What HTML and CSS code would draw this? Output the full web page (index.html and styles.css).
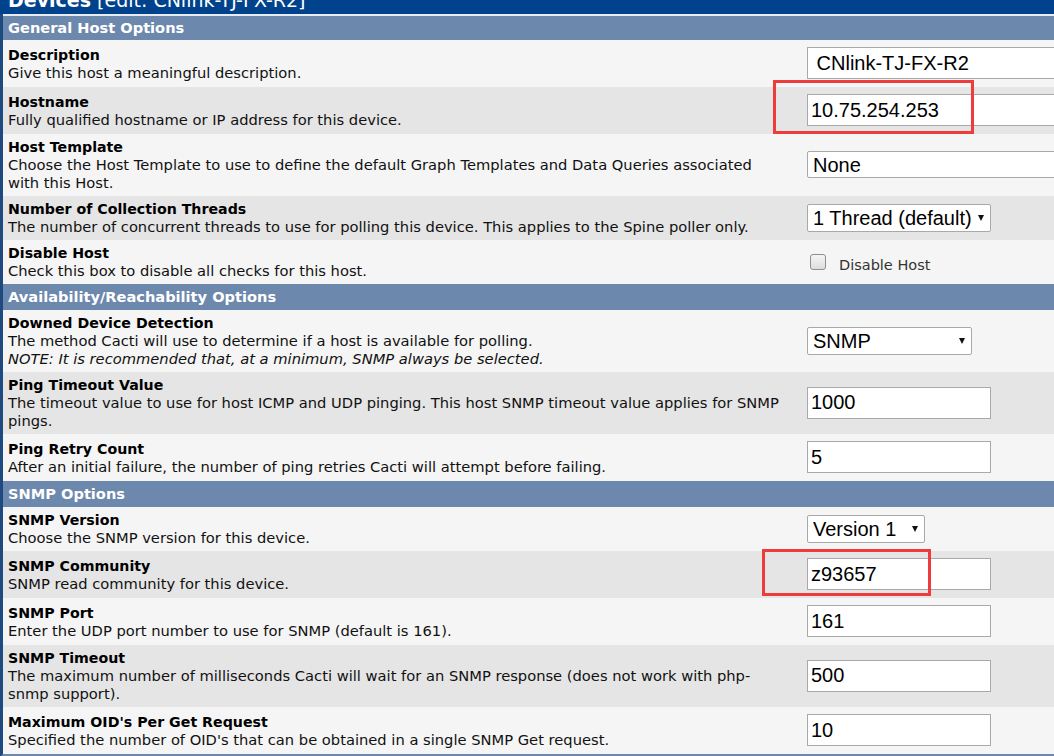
FILE: index.html
```html
<!DOCTYPE html>
<html>
<head>
<meta charset="utf-8">
<title>Devices</title>
<link rel="stylesheet" href="styles.css">
</head>
<body>
<div class="page">
  <div class="titlebar"><div class="title"><b>Devices</b> [edit: CNlink-TJ-FX-R2]</div></div>
  <div class="frame">
    <div class="section first">General Host Options</div>
    <div class="row">
      <div class="lbl"><b>Description</b><br>Give this host a meaningful description.</div>
      <div class="ctl"><input class="txt wide" type="text" value=" CNlink-TJ-FX-R2"></div>
    </div>
    <div class="row alt">
      <div class="lbl"><b>Hostname</b><br>Fully qualified hostname or IP address for this device.</div>
      <div class="ctl"><input class="txt wide" type="text" value="10.75.254.253"></div>
    </div>
    <div class="row">
      <div class="lbl"><b>Host Template</b><br>Choose the Host Template to use to define the default Graph Templates and Data Queries associated<br>with this Host.</div>
      <div class="ctl"><span class="sel wide"><select><option>None</option></select></span></div>
    </div>
    <div class="row alt">
      <div class="lbl"><b>Number of Collection Threads</b><br>The number of concurrent threads to use for polling this device. This applies to the Spine poller only.</div>
      <div class="ctl"><span class="sel arrow w184"><select><option>1 Thread (default)</option></select></span></div>
    </div>
    <div class="row">
      <div class="lbl"><b>Disable Host</b><br>Check this box to disable all checks for this host.</div>
      <div class="ctl"><label class="chk"><span class="box"></span><span class="chk-text">Disable Host</span></label></div>
    </div>

    <div class="section">Availability/Reachability Options</div>
    <div class="row">
      <div class="lbl"><b>Downed Device Detection</b><br>The method Cacti will use to determine if a host is available for polling.<br><i>NOTE: It is recommended that, at a minimum, SNMP always be selected.</i></div>
      <div class="ctl"><span class="sel arrow w165"><select><option>SNMP</option></select></span></div>
    </div>
    <div class="row alt">
      <div class="lbl"><b>Ping Timeout Value</b><br>The timeout value to use for host ICMP and UDP pinging. This host SNMP timeout value applies for SNMP<br>pings.</div>
      <div class="ctl"><input class="txt" type="text" value="1000"></div>
    </div>
    <div class="row">
      <div class="lbl"><b>Ping Retry Count</b><br>After an initial failure, the number of ping retries Cacti will attempt before failing.</div>
      <div class="ctl"><input class="txt" type="text" value="5"></div>
    </div>

    <div class="section">SNMP Options</div>
    <div class="row">
      <div class="lbl"><b>SNMP Version</b><br>Choose the SNMP version for this device.</div>
      <div class="ctl"><span class="sel arrow w118"><select><option>Version 1</option></select></span></div>
    </div>
    <div class="row alt">
      <div class="lbl"><b>SNMP Community</b><br>SNMP read community for this device.</div>
      <div class="ctl"><input class="txt" type="text" value="z93657"></div>
    </div>
    <div class="row">
      <div class="lbl"><b>SNMP Port</b><br>Enter the UDP port number to use for SNMP (default is 161).</div>
      <div class="ctl"><input class="txt" type="text" value="161"></div>
    </div>
    <div class="row alt">
      <div class="lbl"><b>SNMP Timeout</b><br>The maximum number of milliseconds Cacti will wait for an SNMP response (does not work with php-<br>snmp support).</div>
      <div class="ctl"><input class="txt" type="text" value="500"></div>
    </div>
    <div class="row">
      <div class="lbl"><b>Maximum OID's Per Get Request</b><br>Specified the number of OID's that can be obtained in a single SNMP Get request.</div>
      <div class="ctl"><input class="txt" type="text" value="10"></div>
    </div>
  </div>
  <div class="mark mark-host"></div>
  <div class="mark mark-comm"></div>
</div>
</body>
</html>
```

FILE: styles.css
```css
html, body {
  margin: 0;
  padding: 0;
  background: #ffffff;
  overflow: hidden;
}
.page {
  position: relative;
  width: 1054px;
  height: 756px;
  overflow: hidden;
  font-family: "DejaVu Sans", Verdana, sans-serif;
  font-size: 14.7px;
  color: #000;
}
.titlebar {
  height: 14px;
  background: #00438c;
  overflow: hidden;
  border-left: 3px solid #00438c;
}
.title {
  margin-top: -12px;
  padding-left: 5px;
  color: #fff;
  font-size: 19px;
  line-height: 24px;
  white-space: nowrap;
}
.frame {
  border-left: 3px solid #1e4a80;
  border-bottom: 3px solid #6d88ad;
}
.section {
  height: 26px;
  line-height: 26px;
  background: #6d88ad;
  color: #fff;
  font-weight: bold;
  font-size: 14.6px;
  padding-left: 5px;
  white-space: nowrap;
}
.section.first {
  height: 24px;
  line-height: 24px;
  border-top: 2px solid #e8edf3;
}
.row {
  display: grid;
  grid-template-columns: 797px 1fr;
  align-items: center;
  background: #f5f5f5;
}
.row.alt {
  background: #e5e5e5;
}
.lbl {
  padding: 4px 5px;
  line-height: 18px;
  white-space: nowrap;
  color: #111;
}
.lbl b {
  font-size: 14.2px;
  color: #000;
}
.ctl {
  padding: 7px 0 8px 7px;
  display: flex;
  align-items: center;
  min-width: 0;
}
.txt {
  box-sizing: border-box;
  width: 184px;
  height: 32px;
  margin: 0;
  border: 1px solid #a9a9a9;
  background: #fff;
  padding: 0 3px;
  font-family: "Liberation Sans", Arial, sans-serif;
  font-size: 20px;
  color: #000;
  outline: none;
}
.txt.wide {
  width: 400px;
  flex: none;
}
.sel {
  position: relative;
  display: inline-block;
  flex: none;
}
.sel select {
  -webkit-appearance: none;
  appearance: none;
  box-sizing: border-box;
  width: 100%;
  height: 28px;
  margin: 0;
  border: 1px solid #a9a9a9;
  border-radius: 2px;
  background: #fff;
  padding: 0 5px;
  font-family: "Liberation Sans", Arial, sans-serif;
  font-size: 20px;
  color: #000;
  outline: none;
}
.sel.wide { width: 400px; }
.sel.wide select { height: 27px; }
.w184 { width: 184px; }
.w165 { width: 165px; }
.w118 { width: 118px; }
.sel.arrow::after {
  content: "";
  position: absolute;
  right: 7px;
  top: 11px;
  border-left: 3px solid transparent;
  border-right: 3px solid transparent;
  border-top: 6px solid #111;
  pointer-events: none;
}
.chk {
  display: flex;
  align-items: center;
  font-size: 14.5px;
  color: #333;
}
.chk-text {
  padding-top: 6px;
}
.box {
  box-sizing: border-box;
  width: 16px;
  height: 16px;
  margin-left: 3px;
  margin-right: 13px;
  border: 1px solid #8f8f8f;
  border-radius: 3px;
  background: linear-gradient(#f4f4f4, #dedede);
}
.mark {
  position: absolute;
  border: 3px solid #ee3b3b;
  box-sizing: border-box;
}
.mark-host {
  left: 773px;
  top: 80px;
  width: 201px;
  height: 54px;
}
.mark-comm {
  left: 762px;
  top: 549px;
  width: 169px;
  height: 47px;
}
```
